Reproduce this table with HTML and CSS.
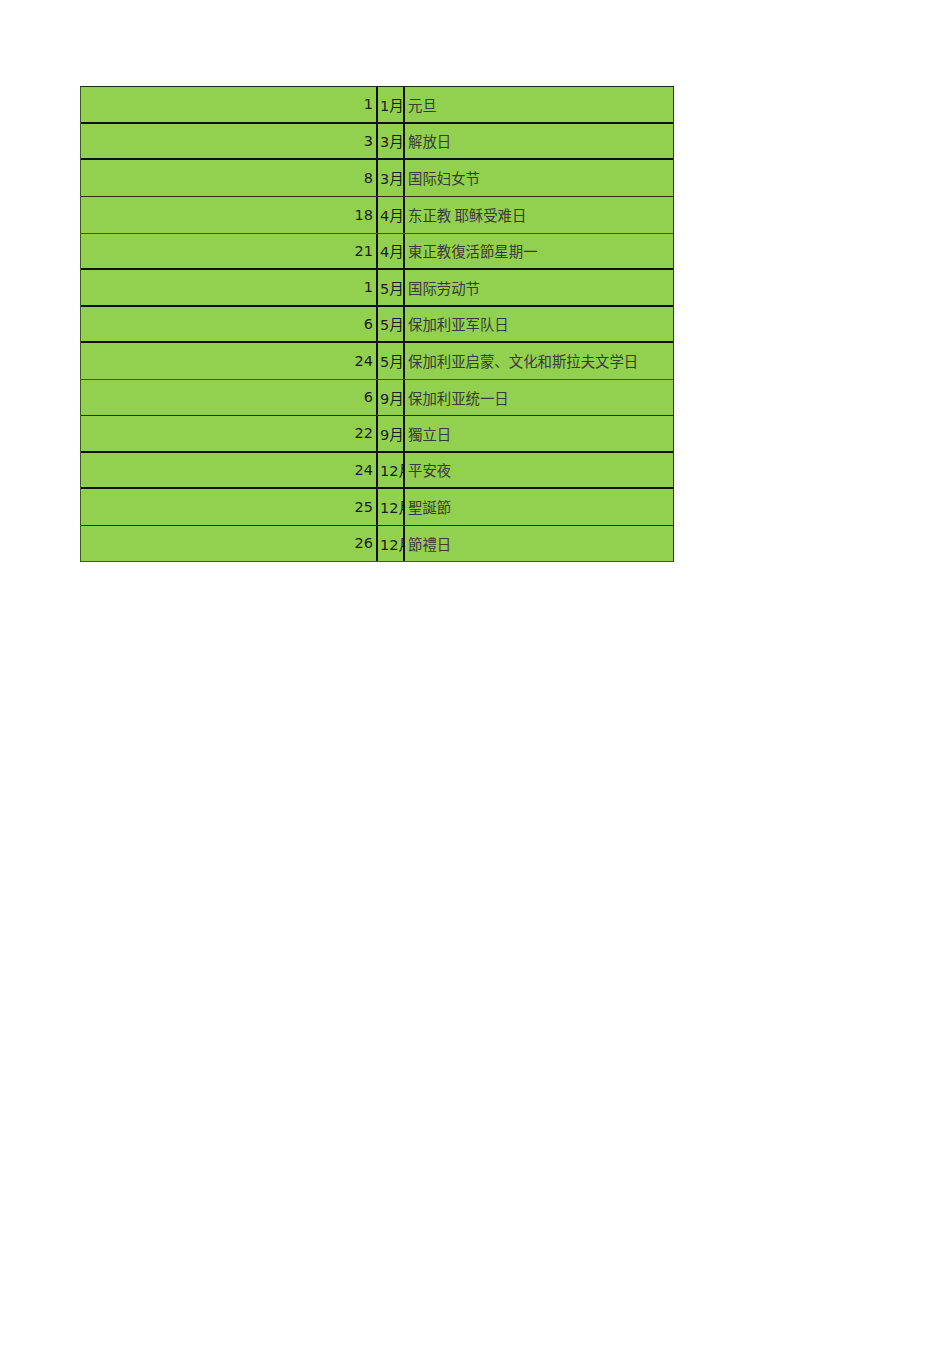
FILE: index.html
```html
<!DOCTYPE html>
<html lang="zh">
<head>
<meta charset="utf-8">
<title>Holidays</title>
<link rel="stylesheet" href="styles.css">
</head>
<body>
<div class="sheet">
  <div class="table">
    <div class="row h37 thick"><div class="day">1</div><div class="mon">1月</div><div class="name">元旦</div></div>
    <div class="row h36 thick"><div class="day">3</div><div class="mon">3月</div><div class="name">解放日</div></div>
    <div class="row h37 thin"><div class="day">8</div><div class="mon">3月</div><div class="name">国际妇女节</div></div>
    <div class="row h37 thin green"><div class="day">18</div><div class="mon">4月</div><div class="name">东正教 耶稣受难日</div></div>
    <div class="row h36 thick"><div class="day">21</div><div class="mon">4月</div><div class="name">東正教復活節星期一</div></div>
    <div class="row h37 thick"><div class="day">1</div><div class="mon">5月</div><div class="name">国际劳动节</div></div>
    <div class="row h36 thick"><div class="day">6</div><div class="mon">5月</div><div class="name">保加利亚军队日</div></div>
    <div class="row h37 thin green"><div class="day">24</div><div class="mon">5月</div><div class="name">保加利亚启蒙、文化和斯拉夫文学日</div></div>
    <div class="row h36 thin"><div class="day">6</div><div class="mon">9月</div><div class="name">保加利亚统一日</div></div>
    <div class="row h37 thick"><div class="day">22</div><div class="mon">9月</div><div class="name">獨立日</div></div>
    <div class="row h36 thick"><div class="day">24</div><div class="mon">12月</div><div class="name">平安夜</div></div>
    <div class="row h37 thin"><div class="day">25</div><div class="mon">12月</div><div class="name">聖誕節</div></div>
    <div class="row h36 thin green"><div class="day">26</div><div class="mon">12月</div><div class="name">節禮日</div></div>
  </div>
</div>
</body>
</html>
```
FILE: styles.css
```css
html, body {
  margin: 0;
  padding: 0;
  background: #ffffff;
}

.sheet {
  padding: 86px 0 0 80px;
}

.table {
  width: 594px;
  box-sizing: border-box;
  border-top: 1px solid #1f2a14;
  border-left: 1px solid #3d5a25;
  border-right: 1px solid #2a3a1a;
  background: #92d050;
}

.row {
  display: grid;
  grid-template-columns: 295px 2px 25px 2px 1fr;
  box-sizing: border-box;
  align-items: center;
  padding-bottom: 1px;
  background-image:
    linear-gradient(#111, #111),
    linear-gradient(#111, #111);
  background-size: 2px 100%, 2px 100%;
  background-position: 295px 0, 322px 0;
  background-repeat: no-repeat;
}

.row > .day { grid-column: 1; }
.row > .mon { grid-column: 3; }
.row > .name { grid-column: 5; }

.h37 { height: 37px; }
.h36 { height: 36px; }

.thick { border-bottom: 2px solid #111; }
.thin { border-bottom: 1px solid #263018; }
.green { border-bottom-color: #3f5e24; }

.day {
  text-align: right;
  padding-right: 3px;
  font-family: "DejaVu Sans", Verdana, sans-serif;
  font-size: 14.5px;
  color: #1c1c1c;
  white-space: nowrap;
}

.mon {
  padding-left: 2px;
  font-family: "DejaVu Sans", "Noto Sans CJK SC", sans-serif;
  font-size: 14.5px;
  color: #1c1c1c;
  white-space: nowrap;
  overflow: hidden;
}

.name {
  padding-left: 3px;
  font-family: "Noto Sans CJK SC", sans-serif;
  font-size: 14.4px;
  font-weight: 400;
  color: #3a3a3a;
  white-space: nowrap;
}
```
